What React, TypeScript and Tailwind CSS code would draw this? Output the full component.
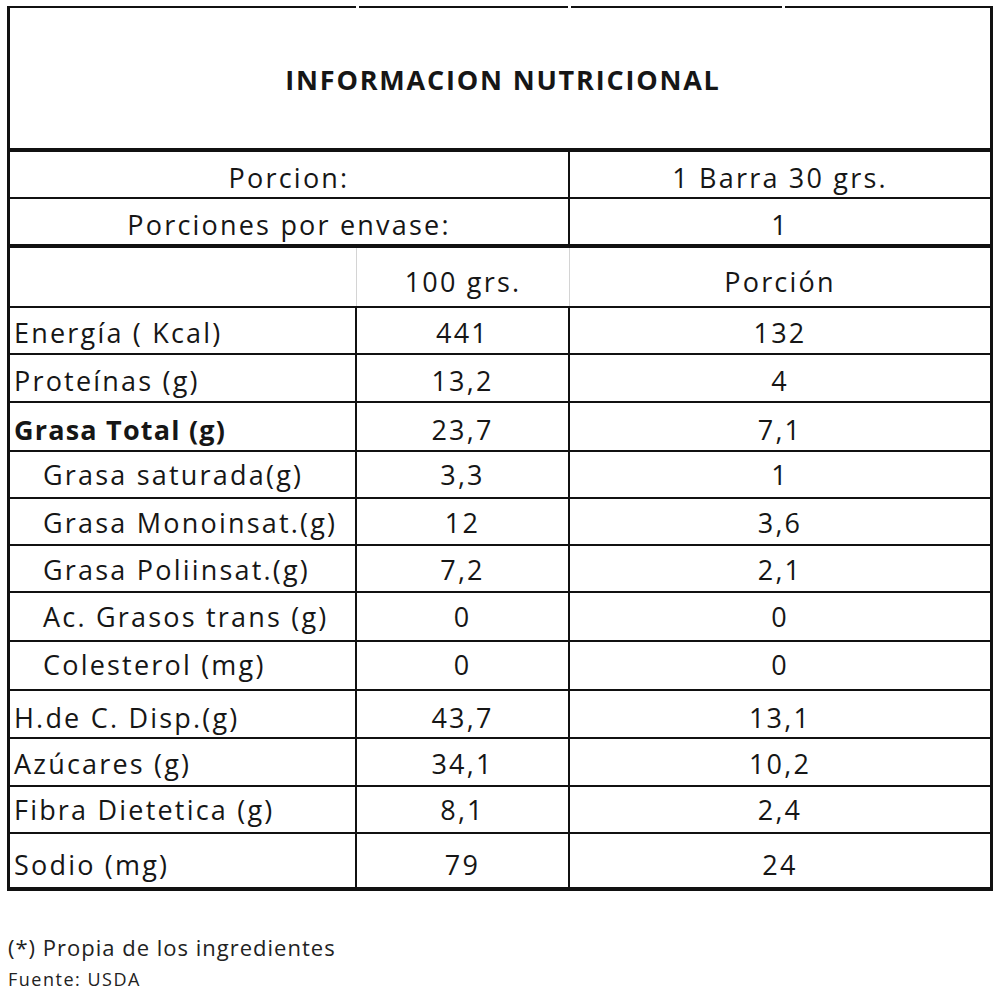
import React from "react";

type Row = {
  label: string;
  v100: string;
  vp: string;
  h: string;
  pb: string;
  indent?: boolean;
  bold?: boolean;
  last?: boolean;
};

const rows: Row[] = [
  { label: "Energía ( Kcal)", v100: "441", vp: "132", h: "h-[47px]", pb: "pb-[7px]" },
  { label: "Proteínas (g)", v100: "13,2", vp: "4", h: "h-[48px]", pb: "pb-[7px]" },
  { label: "Grasa Total (g)", v100: "23,7", vp: "7,1", h: "h-[49px]", pb: "pb-[7px]", bold: true },
  { label: "Grasa saturada(g)", v100: "3,3", vp: "1", h: "h-[47px]", pb: "pb-[9px]", indent: true },
  { label: "Grasa Monoinsat.(g)", v100: "12", vp: "3,6", h: "h-[47px]", pb: "pb-[8px]", indent: true },
  { label: "Grasa Poliinsat.(g)", v100: "7,2", vp: "2,1", h: "h-[47px]", pb: "pb-[8px]", indent: true },
  { label: "Ac. Grasos trans (g)", v100: "0", vp: "0", h: "h-[49px]", pb: "pb-[10px]", indent: true },
  { label: "Colesterol (mg)", v100: "0", vp: "0", h: "h-[49px]", pb: "pb-[11px]", indent: true },
  { label: "H.de C. Disp.(g)", v100: "43,7", vp: "13,1", h: "h-[48px]", pb: "pb-[6px]" },
  { label: "Azúcares (g)", v100: "34,1", vp: "10,2", h: "h-[48px]", pb: "pb-[8px]" },
  { label: "Fibra Dietetica (g)", v100: "8,1", vp: "2,4", h: "h-[47px]", pb: "pb-[9px]" },
  { label: "Sodio (mg)", v100: "79", vp: "24", h: "h-[53px]", pb: "pb-[9px]", last: true },
];

export default function App() {
  return (
    <div className="w-[1000px] h-[1000px] bg-white text-[#161616] font-['Open_Sans',sans-serif] font-medium pt-[6px] pl-[7px]">
      <div className="relative w-[986px] border-t-2 border-b-4 border-l-[3px] border-r-[3px] border-[#111]">
        <span className="absolute top-[-2px] left-[346px] w-[3px] h-[2px] bg-white" />
        <span className="absolute top-[-2px] left-[558px] w-[3px] h-[2px] bg-white" />
        <span className="absolute top-[-2px] left-[772px] w-[3px] h-[2px] bg-white" />

        {/* Title */}
        <div className="h-[144px] border-b-4 border-[#111] flex items-center justify-center pt-[3px] pl-[6px]">
          <span className="text-[27px] leading-none font-bold tracking-[1.8px]">
            INFORMACION NUTRICIONAL
          </span>
        </div>

        {/* Porcion */}
        <div className="h-[47px] border-b-2 border-[#111] flex text-[27px] leading-none tracking-[2.2px]">
          <div className="w-[560px] border-r-2 border-[#111] flex items-end justify-center pb-[6px]">
            Porcion:
          </div>
          <div className="flex-1 flex items-end justify-center pb-[6px]">1 Barra 30 grs.</div>
        </div>

        {/* Porciones por envase */}
        <div className="h-[49px] border-b-4 border-[#111] flex text-[27px] leading-none tracking-[2.2px]">
          <div className="w-[560px] border-r-2 border-[#111] flex items-end justify-center pb-[6px]">
            Porciones por envase:
          </div>
          <div className="flex-1 flex items-end justify-center pb-[6px]">1</div>
        </div>

        {/* Header */}
        <div className="h-[60px] border-b-2 border-[#111] flex text-[27px] leading-none tracking-[2.2px]">
          <div className="w-[347px] border-r border-[#d4d4d4] mr-px" />
          <div className="w-[213px] border-r border-[#d4d4d4] mr-px -ml-px flex items-end justify-center pb-[11px]">
            100 grs.
          </div>
          <div className="flex-1 -ml-px flex items-end justify-center pb-[11px]">Porción</div>
        </div>

        {rows.map((r) => (
          <div
            key={r.label}
            className={`${r.h} ${r.last ? "" : "border-b-2 border-[#111]"} flex text-[27px] leading-none tracking-[2.2px]`}
          >
            <div
              className={`w-[347px] border-r-2 border-[#111] flex items-end ${r.pb} ${r.indent ? "pl-[33px]" : "pl-[4px]"} ${r.bold ? "font-bold tracking-[1.2px]" : ""}`}
            >
              {r.label}
            </div>
            <div className={`w-[213px] border-r-2 border-[#111] flex items-end justify-center ${r.pb}`}>
              {r.v100}
            </div>
            <div className={`flex-1 flex items-end justify-center ${r.pb}`}>{r.vp}</div>
          </div>
        ))}
      </div>

      <div className="mt-[45px] pl-px text-[22px] leading-none tracking-[1px] text-[#222]">
        (*) Propia de los ingredientes
      </div>
      <div className="mt-[12px] pl-px text-[18px] leading-none tracking-[1.5px] text-[#222]">
        Fuente: USDA
      </div>
    </div>
  );
}
